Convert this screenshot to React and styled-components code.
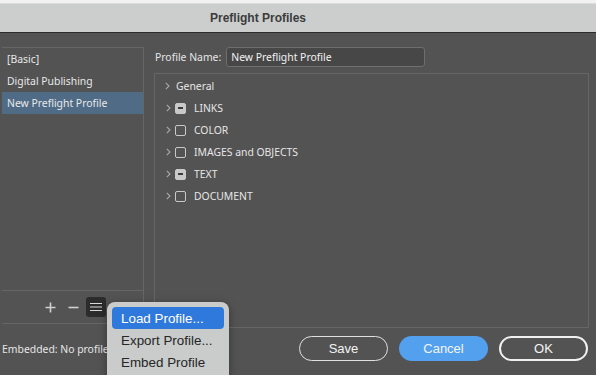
import React from "react";
import styled, { createGlobalStyle } from "styled-components";

const Global = createGlobalStyle`
  html, body { margin: 0; padding: 0; background: #535353; }
  body { font-family: "Noto Sans", "DejaVu Sans", sans-serif; }
`;

const Page = styled.div`
  width: 596px;
  height: 375px;
  background: #535353;
  position: relative;
  overflow: hidden;
  display: flex;
  flex-direction: column;
  color: #e6e6e6;
  font-size: 10.4px;
`;

const TopStrip = styled.div`
  height: 3px;
  background: #f2f2f2;
  border-bottom: 1px solid #dcdcdc;
`;

const TitleBar = styled.div`
  height: 28px;
  background: #cbcecd;
  border-bottom: 1px solid #2b2b2b;
  display: flex;
  align-items: center;
  justify-content: center;
  padding-right: 80px;
  font-family: "Liberation Sans", Arial, sans-serif;
  font-weight: bold;
  font-size: 12px;
  color: #3c3c3c;
`;

const Body = styled.div`
  display: flex;
  padding: 14px 7px 0 2px;
  gap: 10px;
`;

const ListPanel = styled.div`
  width: 141px;
  height: 275px;
  border: 1px solid #666;
  border-left: none;
  display: flex;
  flex-direction: column;
`;

const ProfileList = styled.div`
  flex: 1;
`;

const ProfileItem = styled.div`
  height: 22px;
  display: flex;
  align-items: center;
  padding-left: 5px;
  background: ${(p) => (p.$selected ? "#506b86" : "transparent")};
  color: #e8e8e8;
`;

const ListFooter = styled.div`
  height: 32px;
  border-top: 1px solid #666;
  display: flex;
  align-items: center;
  justify-content: flex-start;
  padding-left: 38px;
  gap: 3px;
`;

const IconBtn = styled.div`
  width: 20px;
  height: 20px;
  display: flex;
  align-items: center;
  justify-content: center;
  border-radius: 3px;
  background: ${(p) => (p.$active ? "#2c2c2c" : "transparent")};
`;

const RightCol = styled.div`
  flex: 1;
  display: flex;
  flex-direction: column;
`;

const NameRow = styled.div`
  display: flex;
  align-items: center;
  height: 20px;
  gap: 5px;
  padding-left: 1px;
`;

const Label = styled.span`
  color: #e6e6e6;
`;

const NameInput = styled.div`
  width: 193px;
  height: 18px;
  border: 1px solid #6e6e6e;
  border-radius: 3px;
  background: #474747;
  display: flex;
  align-items: center;
  padding-left: 4px;
  color: #f2f2f2;
`;

const Tree = styled.div`
  margin-top: 6px;
  height: 252px;
  border: 1px solid #666;
  padding-top: 1px;
`;

const TreeRow = styled.div`
  height: 22px;
  display: flex;
  align-items: center;
  padding-left: ${(p) => (p.$plain ? "10px" : "11px")};
  gap: ${(p) => (p.$plain ? "6px" : "4px")};
`;

const Box = styled.span`
  width: 11px;
  height: 11px;
  box-sizing: border-box;
  border-radius: 2px;
  border: 1px solid #c9c9c9;
  background: ${(p) => (p.$mixed ? "#c9c9c9" : "transparent")};
  display: flex;
  align-items: center;
  justify-content: center;
  margin-right: 4px;
  &::after {
    content: "";
    display: ${(p) => (p.$mixed ? "block" : "none")};
    width: 5px;
    height: 2px;
    background: #3a3a3a;
  }
`;

const BottomBar = styled.div`
  display: flex;
  align-items: center;
  padding: 8px 8px 0 2px;
  height: 25px;
`;

const Embedded = styled.span`
  flex: 1;
  color: #e6e6e6;
`;

const Button = styled.div`
  width: 89px;
  height: 25px;
  box-sizing: border-box;
  border-radius: 13px;
  display: flex;
  align-items: center;
  justify-content: center;
  margin-left: 11px;
  font-family: "Liberation Sans", Arial, sans-serif;
  font-size: 13px;
  color: #f4f4f4;
  border: ${(p) =>
    p.$primary ? "none" : p.$default ? "2px solid #f0f0f0" : "1px solid #e0e0e0"};
  background: ${(p) => (p.$primary ? "#52a0ee" : "transparent")};
`;

const Menu = styled.div`
  position: absolute;
  left: 107px;
  top: 302px;
  width: 122px;
  height: 80px;
  background: #c9cccb;
  border-radius: 8px;
  box-shadow: 0 2px 8px rgba(0, 0, 0, 0.35);
  padding: 5px;
  box-sizing: border-box;
  font-family: "Liberation Sans", Arial, sans-serif;
  font-size: 13.4px;
`;

const MenuItem = styled.div`
  height: 22px;
  display: flex;
  align-items: center;
  padding-left: 9px;
  border-radius: 4px;
  color: ${(p) => (p.$hl ? "#ffffff" : "#262626")};
  background: ${(p) => (p.$hl ? "#2f79dc" : "transparent")};
`;

const Chevron = () => (
  <svg width="5" height="8" viewBox="0 0 5 8">
    <polyline points="0.8,0.8 4,4 0.8,7.2" fill="none" stroke="#a8a8a8" strokeWidth="1.1" />
  </svg>
);

const profiles = ["[Basic]", "Digital Publishing", "New Preflight Profile"];
const categories = [
  { name: "LINKS", mixed: true },
  { name: "COLOR" },
  { name: "IMAGES and OBJECTS" },
  { name: "TEXT", mixed: true },
  { name: "DOCUMENT" },
];

export default function App() {
  return (
    <>
      <Global />
      <Page>
        <TopStrip />
        <TitleBar>Preflight Profiles</TitleBar>
        <Body>
          <ListPanel>
            <ProfileList>
              {profiles.map((p, i) => (
                <ProfileItem key={p} $selected={i === 2}>
                  {p}
                </ProfileItem>
              ))}
            </ProfileList>
            <ListFooter>
              <IconBtn>
                <svg width="11" height="11" viewBox="0 0 11 11">
                  <path d="M5.5 0.5v10M0.5 5.5h10" stroke="#d0d0d0" strokeWidth="1.6" />
                </svg>
              </IconBtn>
              <IconBtn>
                <svg width="11" height="11" viewBox="0 0 11 11">
                  <path d="M0.5 5.5h10" stroke="#d0d0d0" strokeWidth="1.6" />
                </svg>
              </IconBtn>
              <IconBtn $active>
                <svg width="12" height="10" viewBox="0 0 12 10">
                  <path d="M0 1.5h12M0 5h12M0 8.5h12" stroke="#d8d8d8" strokeWidth="1.2" />
                </svg>
              </IconBtn>
            </ListFooter>
          </ListPanel>
          <RightCol>
            <NameRow>
              <Label>Profile Name:</Label>
              <NameInput>New Preflight Profile</NameInput>
            </NameRow>
            <Tree>
              <TreeRow $plain>
                <Chevron />
                <span>General</span>
              </TreeRow>
              {categories.map((c) => (
                <TreeRow key={c.name}>
                  <Chevron />
                  <Box $mixed={c.mixed} />
                  <span>{c.name}</span>
                </TreeRow>
              ))}
            </Tree>
          </RightCol>
        </Body>
        <BottomBar>
          <Embedded>Embedded: No profile</Embedded>
          <Button>Save</Button>
          <Button $primary>Cancel</Button>
          <Button $default>OK</Button>
        </BottomBar>
        <Menu>
          <MenuItem $hl>Load Profile...</MenuItem>
          <MenuItem>Export Profile...</MenuItem>
          <MenuItem>Embed Profile</MenuItem>
        </Menu>
      </Page>
    </>
  );
}
